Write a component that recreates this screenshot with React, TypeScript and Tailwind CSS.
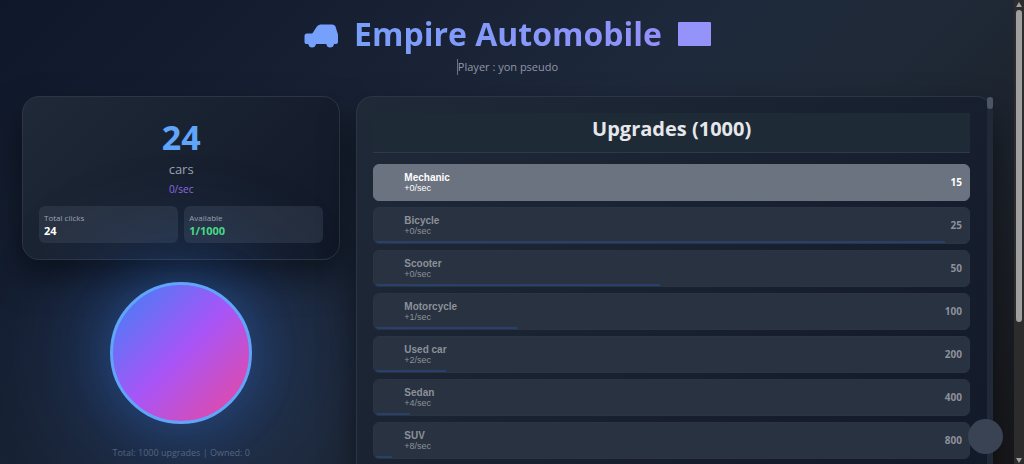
type Upgrade = { name: string; rate: number; price: number };

const cars = 24;

const upgrades: Upgrade[] = [
  { name: "Mechanic", rate: 0, price: 15 },
  { name: "Bicycle", rate: 0, price: 25 },
  { name: "Scooter", rate: 0, price: 50 },
  { name: "Motorcycle", rate: 1, price: 100 },
  { name: "Used car", rate: 2, price: 200 },
  { name: "Sedan", rate: 4, price: 400 },
  { name: "SUV", rate: 8, price: 800 },
];

export default function App() {
  return (
    <div className="flex h-screen overflow-hidden bg-[#1c1c1f] font-['Open_Sans','Noto_Sans',sans-serif] text-white">
      <div className="relative flex min-w-0 flex-1 flex-col overflow-hidden bg-[linear-gradient(135deg,#0f172a_0%,#1e293b_50%,#1f2937_65%,#18181b_100%)] pr-[21px] pl-[22px]">
        <Header />
        <main className="grid grid-cols-[1fr_2fr] items-start gap-4">
          <section>
            <ScoreCard />
            <div className="mt-[22px] flex flex-col items-center">
              <button
                type="button"
                aria-label="Build a car"
                className="size-[142px] rounded-full border-3 border-[#60a5fa] bg-[linear-gradient(135deg,#3b82f6_0%,#a855f7_50%,#ec4899_100%)] shadow-[0_0_50px_rgba(59,130,246,0.2),0_0_110px_16px_rgba(59,130,246,0.38)]"
              />
              <p className="mt-[21px] text-[9px] leading-4 text-[#55657f]">
                Total: 1000 upgrades | Owned: 0
              </p>
            </div>
          </section>
          <UpgradePanel />
        </main>
        <button
          type="button"
          aria-label="Settings"
          className="absolute right-[11px] bottom-[10px] size-[35px] rounded-full bg-[#3a4354]"
        />
      </div>
      <PageScrollbar />
    </div>
  );
}

function Header() {
  return (
    <header className="flex h-24 shrink-0 flex-col items-center pt-[11px]">
      <h1 className="flex items-center gap-4 text-[32px] leading-[46px] font-bold">
        <svg viewBox="0 0 34 24" className="mt-1 h-6 w-[34px]" fill="#75a0fb" aria-hidden="true">
          <path d="M3 9.500H7.500Q8.500 9.500 9 8.500L12.500 3Q14 0.500 16.500 0.500H28Q30.500 0.500 31.500 2.500L33 7.500Q34 9.500 34 12V18Q34 20 32 20H30Q29.500 23.500 26 23.500Q23 23.500 22.300 20H12Q11.300 23.500 8 23.500Q5 23.500 4.200 20H2Q0.500 20 0.500 18V12Q0.500 9.500 3 9.500Z" />
        </svg>
        <span className="bg-linear-to-r from-[#789ffb] to-[#9291fa] bg-clip-text text-transparent">
          Empire Automobile
        </span>
        <span className="h-6 w-[33px] rounded-[1px] bg-[#9393fa]" />
      </h1>
      <p className="mt-0.5 border-l border-[#6b7280] text-[11px] leading-4 text-[#8f97a5]">
        Player : yon pseudo
      </p>
    </header>
  );
}

function ScoreCard() {
  return (
    <div className="rounded-[17px] border border-[#2b3543] bg-[linear-gradient(135deg,#1f2937_0%,#111827_100%)] px-4 pt-4 pb-4 text-center shadow-[0_17px_34px_rgba(0,0,0,0.5)]">
      <div className="text-[34px] leading-[48px] font-bold text-[#60a5fa]">{cars}</div>
      <div className="text-[13px] leading-4 text-[#9ca3af]">cars</div>
      <div className="mt-1 text-[10px] leading-4 text-[#8f6ae0]">0/sec</div>
      <div className="mt-[9px] grid grid-cols-2 gap-1.5 text-left">
        <Stat label="Total clicks" value="24" tone="text-white" />
        <Stat label="Available" value="1/1000" tone="text-[#4ade80]" />
      </div>
    </div>
  );
}

function Stat({ label, value, tone }: { label: string; value: string; tone: string }) {
  return (
    <div className="rounded-md bg-[#374151]/50 px-[5px] py-1.5">
      <div className="text-[8px] leading-3 text-[#9ca3af]">{label}</div>
      <div className={`text-[11px] leading-[13px] font-bold ${tone}`}>{value}</div>
    </div>
  );
}

function UpgradePanel() {
  return (
    <section className="flex h-screen rounded-[17px] border border-r-0 border-[#2b3543] bg-[linear-gradient(135deg,#1f2937_0%,#111827_100%)] shadow-[0_17px_34px_rgba(0,0,0,0.5)]">
      <div className="min-w-0 flex-1 py-4 pr-[17px] pl-4">
        <h2 className="mb-[11px] h-10 border-b border-[#2d3a47] bg-[#1e2a36] text-center text-[20px] leading-[31px] font-bold text-[#e5e7eb]">
          Upgrades (1000)
        </h2>
        <ul className="flex flex-col gap-1.5">
          {upgrades.map((upgrade) => (
            <UpgradeRow key={upgrade.name} upgrade={upgrade} />
          ))}
        </ul>
      </div>
      <div className="w-1.5 bg-[#1f2937]">
        <div className="h-3 rounded-full bg-[#4b5563]" />
      </div>
    </section>
  );
}

function UpgradeRow({ upgrade }: { upgrade: Upgrade }) {
  const affordable = cars >= upgrade.price;
  const progress = (cars / upgrade.price) * 100;

  return (
    <li>
      <button
        type="button"
        disabled={!affordable}
        className={`relative flex h-[37px] w-full items-center justify-between overflow-hidden rounded-md border pr-[7px] pl-[30px] text-left ${
          affordable
            ? "border-[#6b7280] bg-[#6b7280] text-white"
            : "border-[#2b3443] bg-[#293241] text-[#8c9199]"
        }`}
      >
        <span className="font-['Liberation_Sans',Arial,sans-serif]">
          <span className="block text-[10px] leading-[11px] font-bold">{upgrade.name}</span>
          <span className="block text-[9px] leading-[10px]">+{upgrade.rate}/sec</span>
        </span>
        <span className="text-[10px] font-bold">{upgrade.price}</span>
        {!affordable && (
          <span
            className="absolute bottom-0 left-0 h-0.5 bg-[#29406b]"
            style={{ width: `${progress}%` }}
          />
        )}
      </button>
    </li>
  );
}

function PageScrollbar() {
  return (
    <div className="flex w-2.5 shrink-0 flex-col items-center justify-between bg-[#2c2c2c]" aria-hidden="true">
      <svg viewBox="0 0 6 5" className="mt-0.5 h-[5px] w-1.5 shrink-0" fill="#9f9f9f">
        <path d="M3 0L6 5H0Z" />
      </svg>
      <div className="my-[3px] flex-1">
        <div className="h-[70%] w-1.5 rounded-full bg-[#9f9f9f]" />
      </div>
      <svg viewBox="0 0 6 5" className="mb-px h-[5px] w-1.5 shrink-0" fill="#9f9f9f">
        <path d="M0 0H6L3 5Z" />
      </svg>
    </div>
  );
}
